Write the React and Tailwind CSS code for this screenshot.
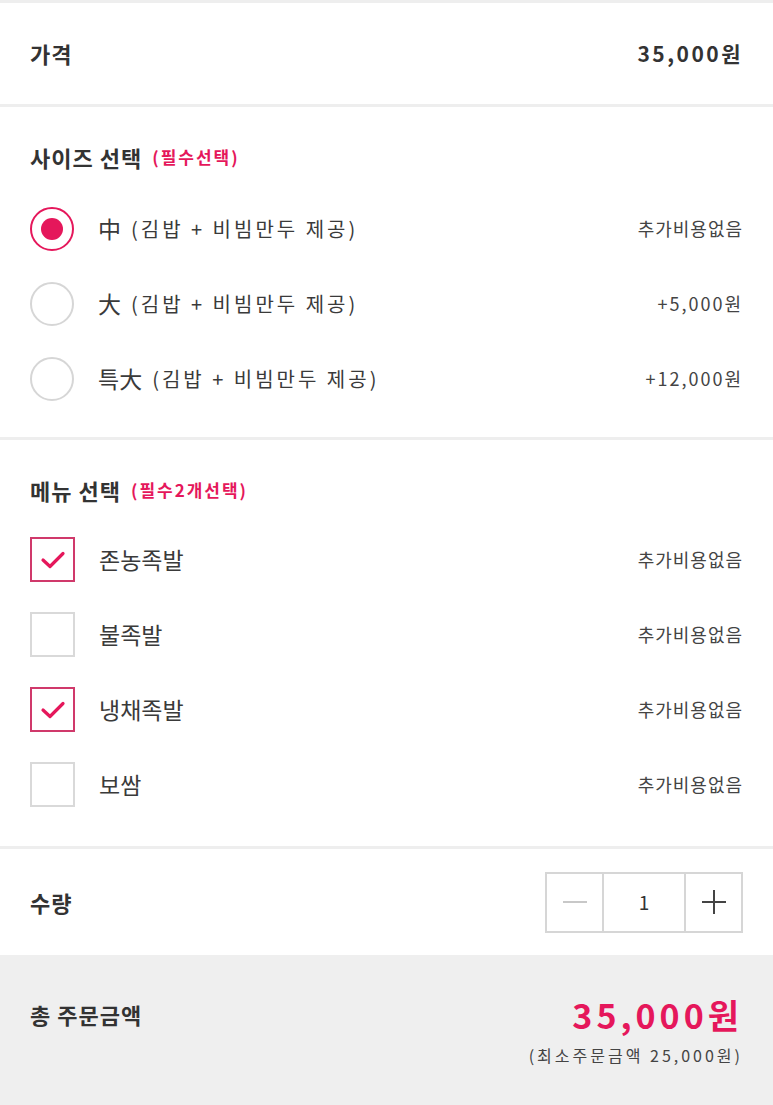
import React, { useState } from 'react';

const PINK = '#e5175b';

const sizes = [
  { label: '中', extra: '추가비용없음', track: 'tracking-[1px]' },
  { label: '大', extra: '+5,000원', track: 'tracking-[2px]' },
  { label: '특大', extra: '+12,000원', track: 'tracking-[2px]' },
];

const menus = ['존농족발', '불족발', '냉채족발', '보쌈'];

function Radio({ on }) {
  return on ? (
    <span className="flex h-[44px] w-[44px] items-center justify-center rounded-full border-2 border-[#e5175b]">
      <span className="h-[22px] w-[22px] rounded-full bg-[#e5175b]" />
    </span>
  ) : (
    <span className="h-[44px] w-[44px] rounded-full border-2 border-[#d6d6d6]" />
  );
}

function Check({ on }) {
  return (
    <span
      className={
        'flex h-[45px] w-[45px] items-center justify-center border-2 ' +
        (on ? 'border-[#d0396b]' : 'border-[#d9d9d9]')
      }
    >
      {on && (
        <svg width="26" height="20" viewBox="0 0 26 20" fill="none">
          <path d="M3 10 L10 16.5 L23 3.5" stroke={PINK} strokeWidth="3.2" strokeLinecap="round" strokeLinejoin="round" />
        </svg>
      )}
    </span>
  );
}

export default function App() {
  const [size, setSize] = useState(0);
  const [picked, setPicked] = useState([0, 2]);
  const [qty, setQty] = useState(1);

  const toggle = (i) =>
    setPicked((p) => (p.includes(i) ? p.filter((x) => x !== i) : [...p, i]));

  return (
    <div
      className="w-[773px] bg-white text-[#333333]"
      style={{ fontFamily: '"Noto Sans CJK KR", "Noto Sans", sans-serif' }}
    >
      {/* 가격 */}
      <div className="flex h-[107px] items-center justify-between border-t-[3px] border-b-[3px] border-[#eeeeee] px-[30px]">
        <span className="text-[22px] font-bold tracking-[1px]">가격</span>
        <span className="text-[21px] font-bold tracking-[2.5px]">35,000원</span>
      </div>

      {/* 사이즈 선택 */}
      <div className="border-b-[3px] border-[#eeeeee] px-[30px] pt-[36px] pb-[21px]">
        <div className="flex h-[28px] items-center gap-[10px]">
          <span className="text-[22px] font-bold tracking-[1px]">사이즈 선택</span>
          <span className="text-[17px] font-semibold tracking-[2px] text-[#e5175b]">(필수선택)</span>
        </div>
        <div className="mt-[20px]">
          {sizes.map((s, i) => (
            <button
              key={s.label}
              onClick={() => setSize(i)}
              className="flex h-[75px] w-full items-center justify-between"
            >
              <span className="flex items-center">
                <Radio on={size === i} />
                <span className="ml-[24px] text-[23px] text-[#3a3a3a]">{s.label}</span>
                <span className="ml-[10px] text-[20px] tracking-[3px] text-[#3a3a3a]">(김밥 + 비빔만두 제공)</span>
              </span>
              <span className={'text-[18px] text-[#444444] ' + s.track}>{s.extra}</span>
            </button>
          ))}
        </div>
      </div>

      {/* 메뉴 선택 */}
      <div className="border-b-[3px] border-[#eeeeee] px-[30px] pt-[36px] pb-[24px]">
        <div className="flex h-[28px] items-center gap-[10px]">
          <span className="text-[22px] font-bold tracking-[1px]">메뉴 선택</span>
          <span className="text-[17px] font-semibold tracking-[2px] text-[#e5175b]">(필수2개선택)</span>
        </div>
        <div className="mt-[18px]">
          {menus.map((m, i) => (
            <button
              key={m}
              onClick={() => toggle(i)}
              className="flex h-[75px] w-full items-center justify-between"
            >
              <span className="flex items-center">
                <Check on={picked.includes(i)} />
                <span className="ml-[24px] text-[23px] text-[#3a3a3a]">{m}</span>
              </span>
              <span className="text-[18px] tracking-[1px] text-[#444444]">추가비용없음</span>
            </button>
          ))}
        </div>
      </div>

      {/* 수량 */}
      <div className="flex h-[106px] items-center justify-between px-[30px]">
        <span className="text-[22px] font-bold tracking-[1px]">수량</span>
        <div className="flex h-[61px] border-2 border-[#d6d6d6]">
          <button
            onClick={() => setQty((q) => Math.max(1, q - 1))}
            className="flex w-[57px] items-center justify-center border-r-2 border-[#d6d6d6]"
          >
            <span className="h-[2px] w-[24px] bg-[#c8c8c8]" />
          </button>
          <span className="flex w-[80px] items-center justify-center text-[19px] text-[#333333]">{qty}</span>
          <button
            onClick={() => setQty((q) => q + 1)}
            className="flex w-[57px] items-center justify-center border-l-2 border-[#d6d6d6]"
          >
            <svg width="26" height="26" viewBox="0 0 26 26">
              <path d="M13 1 V25 M1 13 H25" stroke="#444444" strokeWidth="2" />
            </svg>
          </button>
        </div>
      </div>

      {/* 총 주문금액 */}
      <div className="h-[151px] bg-[#efefef] px-[30px] pt-[38px]">
        <div className="flex items-start justify-between">
          <span className="mt-[5px] text-[22px] font-bold tracking-[1px]">총 주문금액</span>
          <div className="flex flex-col items-end">
            <span className="text-[34px] leading-[44px] font-bold tracking-[4px] text-[#e5175b]">35,000원</span>
            <span className="mt-[6px] text-[16px] tracking-[3px] text-[#444444]">(최소주문금액 25,000원)</span>
          </div>
        </div>
      </div>
    </div>
  );
}
